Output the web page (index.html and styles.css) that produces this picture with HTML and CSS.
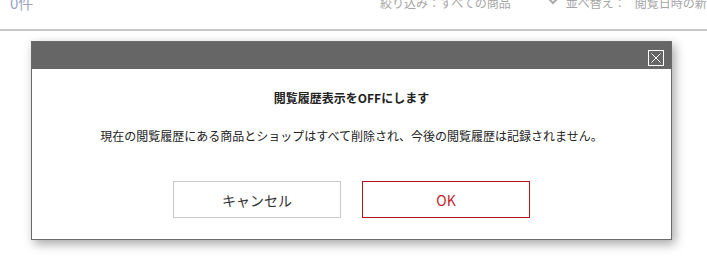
FILE: index.html
```html
<!DOCTYPE html>
<html lang="ja">
<head>
<meta charset="utf-8">
<link rel="stylesheet" href="styles.css">
</head>
<body>
<div class="page">
  <div class="toolbar">
    <span class="count">0件</span>
    <div class="controls">
      <span class="filter">絞り込み：すべての商品</span>
      <svg class="chev" width="14" height="10" viewBox="0 0 14 10"><path d="M1.5 1.5 L7 7 L12.5 1.5" fill="none" stroke="#aaa" stroke-width="2"/></svg>
      <span class="sort-label">並べ替え：</span>
      <span class="sort">閲覧日時の新しい順</span>
    </div>
  </div>
</div>
<div class="modal">
  <div class="modal-head">
    <button class="close" aria-label="閉じる">
      <svg width="16" height="16" viewBox="0 0 16 16"><rect x="0.5" y="0.5" width="15" height="15" fill="none" stroke="#fff" stroke-width="1"/><path d="M3.5 3.5 L12.5 12.5 M12.5 3.5 L3.5 12.5" stroke="#fff" stroke-width="1"/></svg>
    </button>
  </div>
  <div class="modal-body">
    <p class="title">閲覧履歴表示をOFFにします</p>
    <p class="msg">現在の閲覧履歴にある商品とショップはすべて削除され、今後の閲覧履歴は記録されません。</p>
    <div class="actions">
      <button class="btn cancel">キャンセル</button>
      <button class="btn ok">OK</button>
    </div>
  </div>
</div>
</body>
</html>
```

FILE: styles.css
```css
html, body {
  margin: 0;
  padding: 0;
  background: #fff;
  overflow: hidden;
}
body {
  font-family: "Noto Sans CJK JP", "Noto Sans", sans-serif;
  width: 707px;
  height: 274px;
  position: relative;
}
.toolbar {
  height: 29px;
  border-bottom: 2px solid #c8c8c8;
  display: flex;
  align-items: flex-start;
  overflow: hidden;
  color: #a5a5a5;
  font-size: 12px;
}
.count {
  flex: none;
  width: 360px;
  padding-left: 10px;
  margin-top: -7px;
  line-height: 20px;
  font-size: 15px;
  color: #9aa4c0;
}
.controls {
  flex: none;
  display: flex;
  align-items: flex-start;
  margin-left: 10px;
  margin-top: -6px;
  line-height: 18px;
  white-space: nowrap;
}
.chev { margin: 2px 0 0 35px; flex: none; }
.sort-label { margin-left: 6px; }
.sort { margin-left: 9px; }
.modal {
  position: absolute;
  left: 31px;
  top: 41px;
  width: 639px;
  height: 197px;
  background: #fff;
  border: 1px solid #6a6a6a;
  box-shadow: 3px 4px 10px rgba(0,0,0,0.35);
}
.modal-head {
  height: 27px;
  background: #666;
  display: flex;
  justify-content: flex-end;
  align-items: center;
  padding-right: 7px;
}
.close {
  background: none;
  border: 0;
  padding: 0;
  width: 16px;
  height: 16px;
  display: block;
  margin-top: 4px;
  cursor: pointer;
}
.close svg { display: block; }
.modal-body {
  padding-top: 20px;
  text-align: center;
  color: #222;
}
.title {
  margin: 0;
  font-size: 12px;
  font-weight: bold;
  line-height: 18px;
}
.msg {
  margin: 20px 0 0;
  font-size: 12px;
  line-height: 18px;
}
.actions {
  display: flex;
  justify-content: center;
  gap: 21px;
  margin-top: 36px;
}
.btn {
  width: 168px;
  height: 37px;
  background: #fff;
  font-family: "Noto Sans CJK JP", "Noto Sans", sans-serif;
  font-size: 14px;
  padding: 0;
}
.cancel {
  border: 1px solid #c9c9c9;
  color: #333;
}
.ok {
  border: 1px solid #b3121c;
  color: #c3262e;
}
```
